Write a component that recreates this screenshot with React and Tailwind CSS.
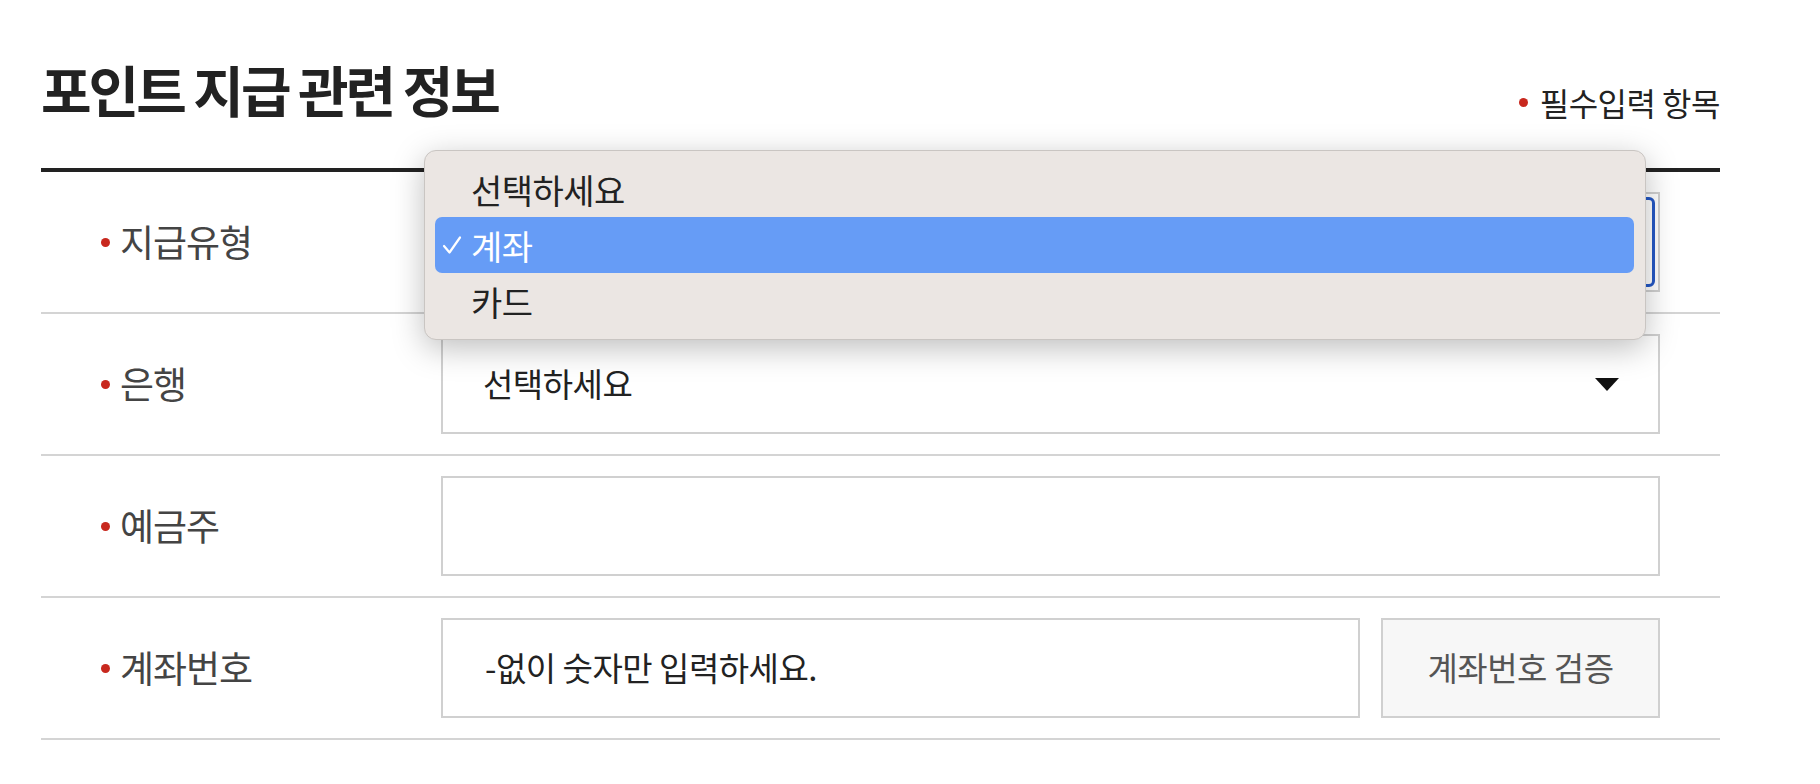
import React from "react";

const Dot = ({ gap = "mr-[12px]" }) => (
  <span className={`${gap} inline-block h-[9px] w-[9px] shrink-0 rounded-full bg-[#c8281e]`} />
);

const Row = ({ label, children }) => (
  <div className="flex h-[142px] items-center border-b-2 border-[#d4d4d4]">
    <div className="flex w-[400px] shrink-0 items-center pl-[60px] text-[37px] tracking-[-1px] text-[#444]">
      <Dot gap="mr-[10px]" />
      <span>{label}</span>
    </div>
    <div className="flex flex-1 items-center pr-[60px]">{children}</div>
  </div>
);

const options = ["선택하세요", "계좌", "카드"];

export default function App() {
  return (
    <div
      className="h-[784px] w-[1820px] bg-white text-[#222]"
      style={{ fontFamily: '"Noto Sans CJK KR", "Noto Sans", sans-serif' }}
    >
      <div className="relative ml-[41px] w-[1679px]">
        {/* Header */}
        <div className="flex h-[168px] items-end justify-between pb-[50px]">
          <h2 className="mb-[2px] text-[55px] font-bold leading-none tracking-[-3px] text-[#222]">
            포인트 지급 관련 정보
          </h2>
          <div className="flex items-center text-[32px] leading-none tracking-[-0.5px] text-[#222]">
            <Dot />
            필수입력 항목
          </div>
        </div>
        <div className="border-t-4 border-[#222]" />

        {/* Rows */}
        <Row label="지급유형">
          <div className="relative flex h-[100px] flex-1 items-center border-2 border-[#d0d0d0] px-[40px] text-[33px]">
            계좌
            <div className="absolute inset-[3px] rounded-[6px] border-[3px] border-[#2458c6]" />
          </div>
        </Row>
        <Row label="은행">
          <div className="flex h-[100px] flex-1 items-center justify-between border-2 border-[#d0d0d0] pl-[40px] pr-[39px] text-[33px] tracking-[-0.5px] text-[#222]">
            <span>선택하세요</span>
            <svg width="24" height="13" viewBox="0 0 24 13">
              <path d="M0 0 H24 L12 13 Z" fill="#111" />
            </svg>
          </div>
        </Row>
        <Row label="예금주">
          <div className="h-[100px] flex-1 border-2 border-[#d0d0d0]" />
        </Row>
        <Row label="계좌번호">
          <div className="flex h-[100px] flex-1 items-center border-2 border-[#d0d0d0] px-[42px] text-[33px] tracking-[-0.5px] text-[#222]">
            -없이 숫자만 입력하세요.
          </div>
          <button className="ml-[21px] flex h-[100px] w-[279px] items-center justify-center border-2 border-[#d0d0d0] bg-[#f7f7f7] text-[33px] tracking-[-0.5px] text-[#555]">
            계좌번호 검증
          </button>
        </Row>

        {/* Open select menu */}
        <div className="absolute left-[383px] top-[150px] w-[1222px] rounded-[12px] border border-[#c9c5c2] bg-[#ebe6e3] p-[10px] pr-[11px] shadow-[0_8px_32px_rgba(0,0,0,0.26)]">
          {options.map((o, i) => {
            const active = i === 1;
            return (
              <div
                key={o}
                className={
                  active
                    ? "flex h-[56px] items-center rounded-[7px] bg-[#669cf6] text-[34px] tracking-[-0.5px] text-white"
                    : "flex h-[56px] items-center text-[34px] tracking-[-0.5px] text-[#222]"
                }
              >
                <span className="flex w-[36px] shrink-0 pl-[7px]">
                  {active && (
                    <svg width="20" height="20" viewBox="0 0 20 20" fill="none">
                      <path
                        d="M2 11 L7.5 17.5 L18 2.5"
                        stroke="white"
                        strokeWidth="2.2"
                        strokeLinecap="round"
                        strokeLinejoin="round"
                      />
                    </svg>
                  )}
                </span>
                <span>{o}</span>
              </div>
            );
          })}
        </div>
      </div>
    </div>
  );
}
